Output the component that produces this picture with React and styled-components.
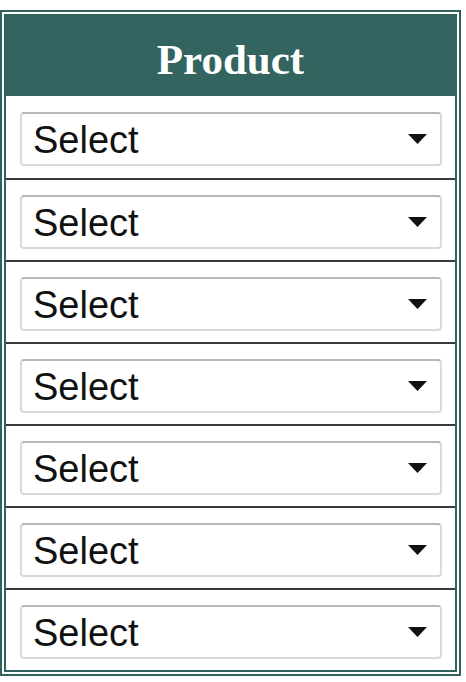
import React from "react";
import styled, { createGlobalStyle } from "styled-components";

const Global = createGlobalStyle`
  html, body { margin: 0; padding: 0; background: #ffffff; }
`;

const Frame = styled.div`
  box-sizing: border-box;
  width: 461px;
  margin: 10px 0 0 0;
  border: 2px solid #2f625f;
  padding: 2px;
  background: #fff;
`;

const Inner = styled.div`
  border: 2px solid #2f625f;
  border-top-width: 1px;
  display: flex;
  flex-direction: column;
`;

const Header = styled.div`
  height: 81px;
  background: #33645f;
  display: flex;
  align-items: center;
  justify-content: center;
  color: #ffffff;
  font-family: "Liberation Serif", "Times New Roman", serif;
  font-weight: bold;
  font-size: 43px;
  padding-top: 7px;
  box-sizing: border-box;
`;

const Row = styled.div`
  box-sizing: border-box;
  height: 82px;
  padding: 15px 13px 0 14px;
  border-top: ${(p) => (p.$first ? "none" : "2px solid #3a3a3a")};
  ${(p) => (p.$first ? "padding-top: 16px;" : "")}
`;

const SelectBox = styled.div`
  box-sizing: border-box;
  height: 54px;
  border: 2px solid #dadada;
  border-top-color: #b8b8b8;
  border-radius: 4px;
  display: flex;
  align-items: center;
  justify-content: space-between;
  padding: 0 13px 0 11px;
  font-family: "Liberation Sans", Arial, sans-serif;
  font-size: 38px;
  color: #111;
  background: #fff;
`;

const Label = styled.span`
  line-height: 1;
  margin-top: 1px;
`;

const Arrow = () => (
  <svg width="19" height="10" viewBox="0 0 19 10">
    <polygon points="0,0 19,0 9.5,10" fill="#111" />
  </svg>
);

export default function App() {
  const rows = Array.from({ length: 7 });
  return (
    <>
      <Global />
      <Frame>
        <Inner>
          <Header>Product</Header>
          {rows.map((_, i) => (
            <Row key={i} $first={i === 0}>
              <SelectBox>
                <Label>Select</Label>
                <Arrow />
              </SelectBox>
            </Row>
          ))}
        </Inner>
      </Frame>
    </>
  );
}
